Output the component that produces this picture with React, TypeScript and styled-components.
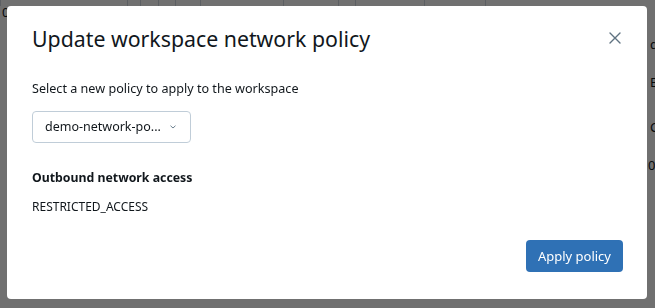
import styled, { createGlobalStyle } from 'styled-components'

const GlobalStyle = createGlobalStyle`
  html, body {
    margin: 0;
    padding: 0;
    width: 655px;
    height: 308px;
    overflow: hidden;
    background: #ffffff;
    font-family: "Noto Sans", "Open Sans", sans-serif;
    color: #11171c;
  }
`

const columns = [0, 127, 140, 158, 175, 200, 283, 338, 355, 424, 485]

const cells = [
  { top: 2, left: 2, text: '0' },
  { top: 34, left: 650, text: 'd' },
  { top: 72, left: 650, text: 'Er' },
  { top: 117, left: 650, text: 'Cr' },
  { top: 155, left: 648, text: '02' },
]

const App = () => {
  return (
    <>
      <GlobalStyle />
      <Page>
        {columns.map((x) => (
          <ColumnLine key={x} style={{ left: x }} />
        ))}
        {cells.map((c) => (
          <PageText key={c.text + c.top} style={{ top: c.top, left: c.left }}>
            {c.text}
          </PageText>
        ))}
      </Page>
      <Backdrop>
        <Modal role="dialog" aria-labelledby="modal-title">
          <Header>
            <Title id="modal-title">Update workspace network policy</Title>
            <CloseButton aria-label="Close">
              <svg width="12" height="12" viewBox="0 0 12 12" fill="none">
                <path d="M1 1L11 11M11 1L1 11" stroke="#5f7281" strokeWidth="1.4" strokeLinecap="round" />
              </svg>
            </CloseButton>
          </Header>
          <Body>
            <Label>Select a new policy to apply to the workspace</Label>
            <Select>
              <SelectValue>demo-network-po...</SelectValue>
              <svg width="10" height="10" viewBox="0 0 10 10" fill="none">
                <path d="M2.8 4L5 6L7.2 4" stroke="#6b7f8e" strokeWidth="1" strokeLinecap="round" strokeLinejoin="round" />
              </svg>
            </Select>
            <Section>
              <SectionTitle>Outbound network access</SectionTitle>
              <SectionValue>RESTRICTED_ACCESS</SectionValue>
            </Section>
          </Body>
          <Footer>
            <PrimaryButton>Apply policy</PrimaryButton>
          </Footer>
        </Modal>
      </Backdrop>
    </>
  )
}

const Page = styled.div`
  position: relative;
  width: 655px;
  height: 308px;
  overflow: hidden;
`

const ColumnLine = styled.div`
  position: absolute;
  top: 0;
  height: 6px;
  width: 1px;
  background: #d1d9e1;
`

const PageText = styled.span`
  position: absolute;
  font-size: 13px;
  line-height: 20px;
  color: #11171c;
`

const Backdrop = styled.div`
  position: fixed;
  inset: 0;
  background: rgba(0, 0, 0, 0.56);
  display: flex;
  align-items: flex-start;
  justify-content: center;
  padding-top: 6px;
`

const Modal = styled.div`
  width: 640px;
  height: 293px;
  box-sizing: border-box;
  margin-left: -1px;
  background: #ffffff;
  border-radius: 4px;
  display: flex;
  flex-direction: column;
`

const Header = styled.div`
  display: flex;
  align-items: flex-start;
  justify-content: space-between;
  padding: 18px 26px 0 25px;
`

const Title = styled.h2`
  margin: 0;
  font-size: 21.3px;
  line-height: 30px;
  font-weight: 400;
  color: #11171c;
`

const CloseButton = styled.button`
  border: none;
  background: none;
  padding: 0;
  width: 12px;
  height: 12px;
  margin-top: 8px;
  display: flex;
  cursor: pointer;
`

const Body = styled.div`
  flex: 1;
  display: flex;
  flex-direction: column;
  align-items: flex-start;
  padding: 25px 25px 0;
`

const Label = styled.div`
  font-size: 12.6px;
  line-height: 20px;
  color: #11171c;
`

const Select = styled.div`
  margin-top: 12px;
  width: 159px;
  height: 32px;
  box-sizing: border-box;
  border: 1px solid #c0cdd8;
  border-radius: 4px;
  display: flex;
  align-items: center;
  justify-content: space-between;
  padding: 0 12px 0 12px;
`

const SelectValue = styled.span`
  font-size: 12.5px;
  line-height: 20px;
  color: #11171c;
`

const Section = styled.div`
  margin-top: 25px;
  display: flex;
  flex-direction: column;
  gap: 9px;
`

const SectionTitle = styled.div`
  font-size: 12.3px;
  line-height: 20px;
  font-weight: 700;
`

const SectionValue = styled.div`
  font-size: 12px;
  line-height: 20px;
`

const Footer = styled.div`
  display: flex;
  justify-content: flex-end;
  padding: 0 24px 27px;
`

const PrimaryButton = styled.button`
  height: 32px;
  padding: 0 12px;
  border: none;
  border-radius: 4px;
  background: #2f71b5;
  color: #ffffff;
  font-family: inherit;
  font-size: 13px;
  cursor: pointer;
`

export default App
